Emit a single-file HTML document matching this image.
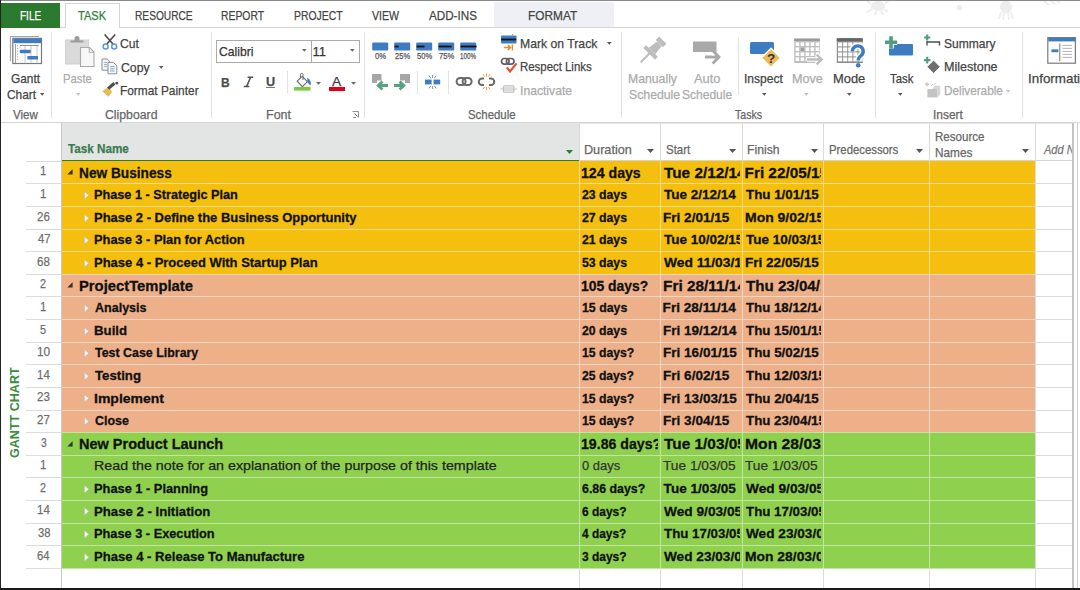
<!DOCTYPE html><html><head><meta charset="utf-8"><style>html,body{margin:0;padding:0}body{width:1080px;height:590px;overflow:hidden;position:relative;background:#fff;font-family:"Liberation Sans", sans-serif;}.t{position:absolute;white-space:nowrap;transform-origin:0 0}</style></head><body><div style="position:absolute;left:61.50px;top:123.20px;width:517.80px;height:38.10px;background:#E3E5E5;"></div>
<div style="position:absolute;left:579.30px;top:123.20px;width:493.50px;height:38.10px;background:#FFFFFF;"></div>
<div style="position:absolute;left:61.50px;top:159.60px;width:517.80px;height:1.90px;background:#2F7A33;"></div>
<div style="position:absolute;left:579.30px;top:160.30px;width:493.50px;height:1.20px;background:#D4D4D4;"></div>
<div style="position:absolute;left:61.50px;top:123.20px;width:1011.30px;height:0.80px;background:#E6E6E6;"></div>
<div style="position:absolute;left:62.10px;top:161.30px;width:973.40px;height:22.61px;background:#F4BF0E;"></div>
<div style="position:absolute;left:62.10px;top:183.91px;width:973.40px;height:22.61px;background:#F4BF0E;"></div>
<div style="position:absolute;left:62.10px;top:206.52px;width:973.40px;height:22.61px;background:#F4BF0E;"></div>
<div style="position:absolute;left:62.10px;top:229.13px;width:973.40px;height:22.61px;background:#F4BF0E;"></div>
<div style="position:absolute;left:62.10px;top:251.74px;width:973.40px;height:22.61px;background:#F4BF0E;"></div>
<div style="position:absolute;left:62.10px;top:274.35px;width:973.40px;height:22.61px;background:#EEB088;"></div>
<div style="position:absolute;left:62.10px;top:296.96px;width:973.40px;height:22.61px;background:#EEB088;"></div>
<div style="position:absolute;left:62.10px;top:319.57px;width:973.40px;height:22.61px;background:#EEB088;"></div>
<div style="position:absolute;left:62.10px;top:342.18px;width:973.40px;height:22.61px;background:#EEB088;"></div>
<div style="position:absolute;left:62.10px;top:364.79px;width:973.40px;height:22.61px;background:#EEB088;"></div>
<div style="position:absolute;left:62.10px;top:387.40px;width:973.40px;height:22.61px;background:#EEB088;"></div>
<div style="position:absolute;left:62.10px;top:410.01px;width:973.40px;height:22.61px;background:#EEB088;"></div>
<div style="position:absolute;left:62.10px;top:432.62px;width:973.40px;height:22.61px;background:#8FD14F;"></div>
<div style="position:absolute;left:62.10px;top:455.23px;width:973.40px;height:22.61px;background:#8FD14F;"></div>
<div style="position:absolute;left:62.10px;top:477.84px;width:973.40px;height:22.61px;background:#8FD14F;"></div>
<div style="position:absolute;left:62.10px;top:500.45px;width:973.40px;height:22.61px;background:#8FD14F;"></div>
<div style="position:absolute;left:62.10px;top:523.06px;width:973.40px;height:22.61px;background:#8FD14F;"></div>
<div style="position:absolute;left:62.10px;top:545.67px;width:973.40px;height:22.61px;background:#8FD14F;"></div>
<div style="position:absolute;left:26.00px;top:183.00px;width:35.50px;height:1.00px;background:#DCDCDC;"></div>
<div style="position:absolute;left:62.10px;top:183.00px;width:973.40px;height:1.00px;background:#F7DB8E;"></div>
<div style="position:absolute;left:1035.50px;top:183.00px;width:37.30px;height:1.00px;background:#DCDCDC;"></div>
<div style="position:absolute;left:26.00px;top:206.00px;width:35.50px;height:1.00px;background:#DCDCDC;"></div>
<div style="position:absolute;left:62.10px;top:206.00px;width:973.40px;height:1.00px;background:#F7DB8E;"></div>
<div style="position:absolute;left:1035.50px;top:206.00px;width:37.30px;height:1.00px;background:#DCDCDC;"></div>
<div style="position:absolute;left:26.00px;top:229.00px;width:35.50px;height:1.00px;background:#DCDCDC;"></div>
<div style="position:absolute;left:62.10px;top:229.00px;width:973.40px;height:1.00px;background:#F7DB8E;"></div>
<div style="position:absolute;left:1035.50px;top:229.00px;width:37.30px;height:1.00px;background:#DCDCDC;"></div>
<div style="position:absolute;left:26.00px;top:251.00px;width:35.50px;height:1.00px;background:#DCDCDC;"></div>
<div style="position:absolute;left:62.10px;top:251.00px;width:973.40px;height:1.00px;background:#F7DB8E;"></div>
<div style="position:absolute;left:1035.50px;top:251.00px;width:37.30px;height:1.00px;background:#DCDCDC;"></div>
<div style="position:absolute;left:26.00px;top:274.00px;width:35.50px;height:1.00px;background:#DCDCDC;"></div>
<div style="position:absolute;left:62.10px;top:274.00px;width:973.40px;height:1.00px;background:#F3D6C4;"></div>
<div style="position:absolute;left:1035.50px;top:274.00px;width:37.30px;height:1.00px;background:#DCDCDC;"></div>
<div style="position:absolute;left:26.00px;top:296.00px;width:35.50px;height:1.00px;background:#DCDCDC;"></div>
<div style="position:absolute;left:62.10px;top:296.00px;width:973.40px;height:1.00px;background:#F3D6C4;"></div>
<div style="position:absolute;left:1035.50px;top:296.00px;width:37.30px;height:1.00px;background:#DCDCDC;"></div>
<div style="position:absolute;left:26.00px;top:319.00px;width:35.50px;height:1.00px;background:#DCDCDC;"></div>
<div style="position:absolute;left:62.10px;top:319.00px;width:973.40px;height:1.00px;background:#F3D6C4;"></div>
<div style="position:absolute;left:1035.50px;top:319.00px;width:37.30px;height:1.00px;background:#DCDCDC;"></div>
<div style="position:absolute;left:26.00px;top:342.00px;width:35.50px;height:1.00px;background:#DCDCDC;"></div>
<div style="position:absolute;left:62.10px;top:342.00px;width:973.40px;height:1.00px;background:#F3D6C4;"></div>
<div style="position:absolute;left:1035.50px;top:342.00px;width:37.30px;height:1.00px;background:#DCDCDC;"></div>
<div style="position:absolute;left:26.00px;top:364.00px;width:35.50px;height:1.00px;background:#DCDCDC;"></div>
<div style="position:absolute;left:62.10px;top:364.00px;width:973.40px;height:1.00px;background:#F3D6C4;"></div>
<div style="position:absolute;left:1035.50px;top:364.00px;width:37.30px;height:1.00px;background:#DCDCDC;"></div>
<div style="position:absolute;left:26.00px;top:387.00px;width:35.50px;height:1.00px;background:#DCDCDC;"></div>
<div style="position:absolute;left:62.10px;top:387.00px;width:973.40px;height:1.00px;background:#F3D6C4;"></div>
<div style="position:absolute;left:1035.50px;top:387.00px;width:37.30px;height:1.00px;background:#DCDCDC;"></div>
<div style="position:absolute;left:26.00px;top:410.00px;width:35.50px;height:1.00px;background:#DCDCDC;"></div>
<div style="position:absolute;left:62.10px;top:410.00px;width:973.40px;height:1.00px;background:#F3D6C4;"></div>
<div style="position:absolute;left:1035.50px;top:410.00px;width:37.30px;height:1.00px;background:#DCDCDC;"></div>
<div style="position:absolute;left:26.00px;top:432.00px;width:35.50px;height:1.00px;background:#DCDCDC;"></div>
<div style="position:absolute;left:62.10px;top:432.00px;width:973.40px;height:1.00px;background:#C3E5A3;"></div>
<div style="position:absolute;left:1035.50px;top:432.00px;width:37.30px;height:1.00px;background:#DCDCDC;"></div>
<div style="position:absolute;left:26.00px;top:455.00px;width:35.50px;height:1.00px;background:#DCDCDC;"></div>
<div style="position:absolute;left:62.10px;top:455.00px;width:973.40px;height:1.00px;background:#C3E5A3;"></div>
<div style="position:absolute;left:1035.50px;top:455.00px;width:37.30px;height:1.00px;background:#DCDCDC;"></div>
<div style="position:absolute;left:26.00px;top:477.00px;width:35.50px;height:1.00px;background:#DCDCDC;"></div>
<div style="position:absolute;left:62.10px;top:477.00px;width:973.40px;height:1.00px;background:#C3E5A3;"></div>
<div style="position:absolute;left:1035.50px;top:477.00px;width:37.30px;height:1.00px;background:#DCDCDC;"></div>
<div style="position:absolute;left:26.00px;top:500.00px;width:35.50px;height:1.00px;background:#DCDCDC;"></div>
<div style="position:absolute;left:62.10px;top:500.00px;width:973.40px;height:1.00px;background:#C3E5A3;"></div>
<div style="position:absolute;left:1035.50px;top:500.00px;width:37.30px;height:1.00px;background:#DCDCDC;"></div>
<div style="position:absolute;left:26.00px;top:523.00px;width:35.50px;height:1.00px;background:#DCDCDC;"></div>
<div style="position:absolute;left:62.10px;top:523.00px;width:973.40px;height:1.00px;background:#C3E5A3;"></div>
<div style="position:absolute;left:1035.50px;top:523.00px;width:37.30px;height:1.00px;background:#DCDCDC;"></div>
<div style="position:absolute;left:26.00px;top:545.00px;width:35.50px;height:1.00px;background:#DCDCDC;"></div>
<div style="position:absolute;left:62.10px;top:545.00px;width:973.40px;height:1.00px;background:#C3E5A3;"></div>
<div style="position:absolute;left:1035.50px;top:545.00px;width:37.30px;height:1.00px;background:#DCDCDC;"></div>
<div style="position:absolute;left:26.00px;top:568.00px;width:35.50px;height:1.00px;background:#DCDCDC;"></div>
<div style="position:absolute;left:62.10px;top:568.00px;width:973.40px;height:1.00px;background:#C3E5A3;"></div>
<div style="position:absolute;left:1035.50px;top:568.00px;width:37.30px;height:1.00px;background:#DCDCDC;"></div>
<div style="position:absolute;left:26.00px;top:160.70px;width:35.50px;height:1.10px;background:#DCDCDC;"></div>
<div style="position:absolute;left:60.90px;top:123.20px;width:1.20px;height:466.80px;background:#C8C8C8;"></div>
<div style="position:absolute;left:578.80px;top:123.20px;width:1.00px;height:38.10px;background:#DADADA;"></div>
<div style="position:absolute;left:578.80px;top:161.30px;width:1.00px;height:22.61px;background:#F7DB8E;"></div>
<div style="position:absolute;left:578.80px;top:183.91px;width:1.00px;height:22.61px;background:#F7DB8E;"></div>
<div style="position:absolute;left:578.80px;top:206.52px;width:1.00px;height:22.61px;background:#F7DB8E;"></div>
<div style="position:absolute;left:578.80px;top:229.13px;width:1.00px;height:22.61px;background:#F7DB8E;"></div>
<div style="position:absolute;left:578.80px;top:251.74px;width:1.00px;height:22.61px;background:#F7DB8E;"></div>
<div style="position:absolute;left:578.80px;top:274.35px;width:1.00px;height:22.61px;background:#F3D6C4;"></div>
<div style="position:absolute;left:578.80px;top:296.96px;width:1.00px;height:22.61px;background:#F3D6C4;"></div>
<div style="position:absolute;left:578.80px;top:319.57px;width:1.00px;height:22.61px;background:#F3D6C4;"></div>
<div style="position:absolute;left:578.80px;top:342.18px;width:1.00px;height:22.61px;background:#F3D6C4;"></div>
<div style="position:absolute;left:578.80px;top:364.79px;width:1.00px;height:22.61px;background:#F3D6C4;"></div>
<div style="position:absolute;left:578.80px;top:387.40px;width:1.00px;height:22.61px;background:#F3D6C4;"></div>
<div style="position:absolute;left:578.80px;top:410.01px;width:1.00px;height:22.61px;background:#F3D6C4;"></div>
<div style="position:absolute;left:578.80px;top:432.62px;width:1.00px;height:22.61px;background:#C3E5A3;"></div>
<div style="position:absolute;left:578.80px;top:455.23px;width:1.00px;height:22.61px;background:#C3E5A3;"></div>
<div style="position:absolute;left:578.80px;top:477.84px;width:1.00px;height:22.61px;background:#C3E5A3;"></div>
<div style="position:absolute;left:578.80px;top:500.45px;width:1.00px;height:22.61px;background:#C3E5A3;"></div>
<div style="position:absolute;left:578.80px;top:523.06px;width:1.00px;height:22.61px;background:#C3E5A3;"></div>
<div style="position:absolute;left:578.80px;top:545.67px;width:1.00px;height:22.61px;background:#C3E5A3;"></div>
<div style="position:absolute;left:578.80px;top:568.28px;width:1.00px;height:21.72px;background:#DCDCDC;"></div>
<div style="position:absolute;left:660.00px;top:123.20px;width:1.00px;height:38.10px;background:#DADADA;"></div>
<div style="position:absolute;left:660.00px;top:161.30px;width:1.00px;height:22.61px;background:#F7DB8E;"></div>
<div style="position:absolute;left:660.00px;top:183.91px;width:1.00px;height:22.61px;background:#F7DB8E;"></div>
<div style="position:absolute;left:660.00px;top:206.52px;width:1.00px;height:22.61px;background:#F7DB8E;"></div>
<div style="position:absolute;left:660.00px;top:229.13px;width:1.00px;height:22.61px;background:#F7DB8E;"></div>
<div style="position:absolute;left:660.00px;top:251.74px;width:1.00px;height:22.61px;background:#F7DB8E;"></div>
<div style="position:absolute;left:660.00px;top:274.35px;width:1.00px;height:22.61px;background:#F3D6C4;"></div>
<div style="position:absolute;left:660.00px;top:296.96px;width:1.00px;height:22.61px;background:#F3D6C4;"></div>
<div style="position:absolute;left:660.00px;top:319.57px;width:1.00px;height:22.61px;background:#F3D6C4;"></div>
<div style="position:absolute;left:660.00px;top:342.18px;width:1.00px;height:22.61px;background:#F3D6C4;"></div>
<div style="position:absolute;left:660.00px;top:364.79px;width:1.00px;height:22.61px;background:#F3D6C4;"></div>
<div style="position:absolute;left:660.00px;top:387.40px;width:1.00px;height:22.61px;background:#F3D6C4;"></div>
<div style="position:absolute;left:660.00px;top:410.01px;width:1.00px;height:22.61px;background:#F3D6C4;"></div>
<div style="position:absolute;left:660.00px;top:432.62px;width:1.00px;height:22.61px;background:#C3E5A3;"></div>
<div style="position:absolute;left:660.00px;top:455.23px;width:1.00px;height:22.61px;background:#C3E5A3;"></div>
<div style="position:absolute;left:660.00px;top:477.84px;width:1.00px;height:22.61px;background:#C3E5A3;"></div>
<div style="position:absolute;left:660.00px;top:500.45px;width:1.00px;height:22.61px;background:#C3E5A3;"></div>
<div style="position:absolute;left:660.00px;top:523.06px;width:1.00px;height:22.61px;background:#C3E5A3;"></div>
<div style="position:absolute;left:660.00px;top:545.67px;width:1.00px;height:22.61px;background:#C3E5A3;"></div>
<div style="position:absolute;left:660.00px;top:568.28px;width:1.00px;height:21.72px;background:#DCDCDC;"></div>
<div style="position:absolute;left:741.90px;top:123.20px;width:1.00px;height:38.10px;background:#DADADA;"></div>
<div style="position:absolute;left:741.90px;top:161.30px;width:1.00px;height:22.61px;background:#F7DB8E;"></div>
<div style="position:absolute;left:741.90px;top:183.91px;width:1.00px;height:22.61px;background:#F7DB8E;"></div>
<div style="position:absolute;left:741.90px;top:206.52px;width:1.00px;height:22.61px;background:#F7DB8E;"></div>
<div style="position:absolute;left:741.90px;top:229.13px;width:1.00px;height:22.61px;background:#F7DB8E;"></div>
<div style="position:absolute;left:741.90px;top:251.74px;width:1.00px;height:22.61px;background:#F7DB8E;"></div>
<div style="position:absolute;left:741.90px;top:274.35px;width:1.00px;height:22.61px;background:#F3D6C4;"></div>
<div style="position:absolute;left:741.90px;top:296.96px;width:1.00px;height:22.61px;background:#F3D6C4;"></div>
<div style="position:absolute;left:741.90px;top:319.57px;width:1.00px;height:22.61px;background:#F3D6C4;"></div>
<div style="position:absolute;left:741.90px;top:342.18px;width:1.00px;height:22.61px;background:#F3D6C4;"></div>
<div style="position:absolute;left:741.90px;top:364.79px;width:1.00px;height:22.61px;background:#F3D6C4;"></div>
<div style="position:absolute;left:741.90px;top:387.40px;width:1.00px;height:22.61px;background:#F3D6C4;"></div>
<div style="position:absolute;left:741.90px;top:410.01px;width:1.00px;height:22.61px;background:#F3D6C4;"></div>
<div style="position:absolute;left:741.90px;top:432.62px;width:1.00px;height:22.61px;background:#C3E5A3;"></div>
<div style="position:absolute;left:741.90px;top:455.23px;width:1.00px;height:22.61px;background:#C3E5A3;"></div>
<div style="position:absolute;left:741.90px;top:477.84px;width:1.00px;height:22.61px;background:#C3E5A3;"></div>
<div style="position:absolute;left:741.90px;top:500.45px;width:1.00px;height:22.61px;background:#C3E5A3;"></div>
<div style="position:absolute;left:741.90px;top:523.06px;width:1.00px;height:22.61px;background:#C3E5A3;"></div>
<div style="position:absolute;left:741.90px;top:545.67px;width:1.00px;height:22.61px;background:#C3E5A3;"></div>
<div style="position:absolute;left:741.90px;top:568.28px;width:1.00px;height:21.72px;background:#DCDCDC;"></div>
<div style="position:absolute;left:823.30px;top:123.20px;width:1.00px;height:38.10px;background:#DADADA;"></div>
<div style="position:absolute;left:823.30px;top:161.30px;width:1.00px;height:22.61px;background:#F7DB8E;"></div>
<div style="position:absolute;left:823.30px;top:183.91px;width:1.00px;height:22.61px;background:#F7DB8E;"></div>
<div style="position:absolute;left:823.30px;top:206.52px;width:1.00px;height:22.61px;background:#F7DB8E;"></div>
<div style="position:absolute;left:823.30px;top:229.13px;width:1.00px;height:22.61px;background:#F7DB8E;"></div>
<div style="position:absolute;left:823.30px;top:251.74px;width:1.00px;height:22.61px;background:#F7DB8E;"></div>
<div style="position:absolute;left:823.30px;top:274.35px;width:1.00px;height:22.61px;background:#F3D6C4;"></div>
<div style="position:absolute;left:823.30px;top:296.96px;width:1.00px;height:22.61px;background:#F3D6C4;"></div>
<div style="position:absolute;left:823.30px;top:319.57px;width:1.00px;height:22.61px;background:#F3D6C4;"></div>
<div style="position:absolute;left:823.30px;top:342.18px;width:1.00px;height:22.61px;background:#F3D6C4;"></div>
<div style="position:absolute;left:823.30px;top:364.79px;width:1.00px;height:22.61px;background:#F3D6C4;"></div>
<div style="position:absolute;left:823.30px;top:387.40px;width:1.00px;height:22.61px;background:#F3D6C4;"></div>
<div style="position:absolute;left:823.30px;top:410.01px;width:1.00px;height:22.61px;background:#F3D6C4;"></div>
<div style="position:absolute;left:823.30px;top:432.62px;width:1.00px;height:22.61px;background:#C3E5A3;"></div>
<div style="position:absolute;left:823.30px;top:455.23px;width:1.00px;height:22.61px;background:#C3E5A3;"></div>
<div style="position:absolute;left:823.30px;top:477.84px;width:1.00px;height:22.61px;background:#C3E5A3;"></div>
<div style="position:absolute;left:823.30px;top:500.45px;width:1.00px;height:22.61px;background:#C3E5A3;"></div>
<div style="position:absolute;left:823.30px;top:523.06px;width:1.00px;height:22.61px;background:#C3E5A3;"></div>
<div style="position:absolute;left:823.30px;top:545.67px;width:1.00px;height:22.61px;background:#C3E5A3;"></div>
<div style="position:absolute;left:823.30px;top:568.28px;width:1.00px;height:21.72px;background:#DCDCDC;"></div>
<div style="position:absolute;left:929.20px;top:123.20px;width:1.00px;height:38.10px;background:#DADADA;"></div>
<div style="position:absolute;left:929.20px;top:161.30px;width:1.00px;height:22.61px;background:#F7DB8E;"></div>
<div style="position:absolute;left:929.20px;top:183.91px;width:1.00px;height:22.61px;background:#F7DB8E;"></div>
<div style="position:absolute;left:929.20px;top:206.52px;width:1.00px;height:22.61px;background:#F7DB8E;"></div>
<div style="position:absolute;left:929.20px;top:229.13px;width:1.00px;height:22.61px;background:#F7DB8E;"></div>
<div style="position:absolute;left:929.20px;top:251.74px;width:1.00px;height:22.61px;background:#F7DB8E;"></div>
<div style="position:absolute;left:929.20px;top:274.35px;width:1.00px;height:22.61px;background:#F3D6C4;"></div>
<div style="position:absolute;left:929.20px;top:296.96px;width:1.00px;height:22.61px;background:#F3D6C4;"></div>
<div style="position:absolute;left:929.20px;top:319.57px;width:1.00px;height:22.61px;background:#F3D6C4;"></div>
<div style="position:absolute;left:929.20px;top:342.18px;width:1.00px;height:22.61px;background:#F3D6C4;"></div>
<div style="position:absolute;left:929.20px;top:364.79px;width:1.00px;height:22.61px;background:#F3D6C4;"></div>
<div style="position:absolute;left:929.20px;top:387.40px;width:1.00px;height:22.61px;background:#F3D6C4;"></div>
<div style="position:absolute;left:929.20px;top:410.01px;width:1.00px;height:22.61px;background:#F3D6C4;"></div>
<div style="position:absolute;left:929.20px;top:432.62px;width:1.00px;height:22.61px;background:#C3E5A3;"></div>
<div style="position:absolute;left:929.20px;top:455.23px;width:1.00px;height:22.61px;background:#C3E5A3;"></div>
<div style="position:absolute;left:929.20px;top:477.84px;width:1.00px;height:22.61px;background:#C3E5A3;"></div>
<div style="position:absolute;left:929.20px;top:500.45px;width:1.00px;height:22.61px;background:#C3E5A3;"></div>
<div style="position:absolute;left:929.20px;top:523.06px;width:1.00px;height:22.61px;background:#C3E5A3;"></div>
<div style="position:absolute;left:929.20px;top:545.67px;width:1.00px;height:22.61px;background:#C3E5A3;"></div>
<div style="position:absolute;left:929.20px;top:568.28px;width:1.00px;height:21.72px;background:#DCDCDC;"></div>
<div style="position:absolute;left:1035.00px;top:123.20px;width:1.00px;height:38.10px;background:#DADADA;"></div>
<div style="position:absolute;left:1035.00px;top:161.30px;width:1.00px;height:22.61px;background:#DCDCDC;"></div>
<div style="position:absolute;left:1035.00px;top:183.91px;width:1.00px;height:22.61px;background:#DCDCDC;"></div>
<div style="position:absolute;left:1035.00px;top:206.52px;width:1.00px;height:22.61px;background:#DCDCDC;"></div>
<div style="position:absolute;left:1035.00px;top:229.13px;width:1.00px;height:22.61px;background:#DCDCDC;"></div>
<div style="position:absolute;left:1035.00px;top:251.74px;width:1.00px;height:22.61px;background:#DCDCDC;"></div>
<div style="position:absolute;left:1035.00px;top:274.35px;width:1.00px;height:22.61px;background:#DCDCDC;"></div>
<div style="position:absolute;left:1035.00px;top:296.96px;width:1.00px;height:22.61px;background:#DCDCDC;"></div>
<div style="position:absolute;left:1035.00px;top:319.57px;width:1.00px;height:22.61px;background:#DCDCDC;"></div>
<div style="position:absolute;left:1035.00px;top:342.18px;width:1.00px;height:22.61px;background:#DCDCDC;"></div>
<div style="position:absolute;left:1035.00px;top:364.79px;width:1.00px;height:22.61px;background:#DCDCDC;"></div>
<div style="position:absolute;left:1035.00px;top:387.40px;width:1.00px;height:22.61px;background:#DCDCDC;"></div>
<div style="position:absolute;left:1035.00px;top:410.01px;width:1.00px;height:22.61px;background:#DCDCDC;"></div>
<div style="position:absolute;left:1035.00px;top:432.62px;width:1.00px;height:22.61px;background:#DCDCDC;"></div>
<div style="position:absolute;left:1035.00px;top:455.23px;width:1.00px;height:22.61px;background:#DCDCDC;"></div>
<div style="position:absolute;left:1035.00px;top:477.84px;width:1.00px;height:22.61px;background:#DCDCDC;"></div>
<div style="position:absolute;left:1035.00px;top:500.45px;width:1.00px;height:22.61px;background:#DCDCDC;"></div>
<div style="position:absolute;left:1035.00px;top:523.06px;width:1.00px;height:22.61px;background:#DCDCDC;"></div>
<div style="position:absolute;left:1035.00px;top:545.67px;width:1.00px;height:22.61px;background:#DCDCDC;"></div>
<div style="position:absolute;left:1035.00px;top:568.28px;width:1.00px;height:21.72px;background:#DCDCDC;"></div>
<div style="position:absolute;left:1072.00px;top:123.20px;width:1.60px;height:466.80px;background:#C4C4C4;"></div>
<div style="position:absolute;left:1076.50px;top:123.00px;width:1.20px;height:465.00px;background:#CFCFCF;"></div>
<div class="t" style="left:68.00px;top:142.40px;font-size:13px;line-height:13px;font-weight:700;color:#3B7B50;-webkit-text-stroke:0.25px #3B7B50;transform:scaleX(0.8985);">Task Name</div>
<div class="t" style="left:584.03px;top:143.00px;font-size:13px;line-height:13px;font-weight:400;color:#666;-webkit-text-stroke:0.25px #666;transform:scaleX(0.9718);">Duration</div>
<div class="t" style="left:665.91px;top:143.00px;font-size:13px;line-height:13px;font-weight:400;color:#666;-webkit-text-stroke:0.25px #666;transform:scaleX(0.8812);">Start</div>
<div class="t" style="left:747.06px;top:143.00px;font-size:13px;line-height:13px;font-weight:400;color:#666;-webkit-text-stroke:0.25px #666;transform:scaleX(0.9394);">Finish</div>
<div class="t" style="left:829.13px;top:143.00px;font-size:13px;line-height:13px;font-weight:400;color:#666;-webkit-text-stroke:0.25px #666;transform:scaleX(0.8718);">Predecessors</div>
<div class="t" style="left:935.11px;top:130.00px;font-size:13px;line-height:13px;font-weight:400;color:#666;-webkit-text-stroke:0.25px #666;transform:scaleX(0.8889);">Resource</div>
<div class="t" style="left:935.09px;top:146.00px;font-size:13px;line-height:13px;font-weight:400;color:#666;-webkit-text-stroke:0.25px #666;transform:scaleX(0.9076);">Names</div>
<div style="position:absolute;left:1036.00px;top:139.00px;width:36.00px;height:21px;overflow:hidden"><div class="t" style="left:7.57px;top:4px;font-size:13px;line-height:13px;font-weight:400;color:#777;font-style:italic;-webkit-text-stroke:0.25px #777;transform:scaleX(0.8500);">Add New</div></div>
<svg style="position:absolute;left:565.50px;top:149.50px" width="7" height="4"><path d="M0 0H7L3.5 4Z" fill="#2F7D32"/></svg>
<svg style="position:absolute;left:646.50px;top:149.30px" width="7" height="4"><path d="M0 0H7L3.5 4Z" fill="#555"/></svg>
<svg style="position:absolute;left:728.50px;top:149.30px" width="7" height="4"><path d="M0 0H7L3.5 4Z" fill="#555"/></svg>
<svg style="position:absolute;left:810.50px;top:149.30px" width="7" height="4"><path d="M0 0H7L3.5 4Z" fill="#555"/></svg>
<svg style="position:absolute;left:915.50px;top:149.30px" width="7" height="4"><path d="M0 0H7L3.5 4Z" fill="#555"/></svg>
<svg style="position:absolute;left:1022.00px;top:149.30px" width="7" height="4"><path d="M0 0H7L3.5 4Z" fill="#555"/></svg>
<div class="t" style="left:40.02px;top:164.30px;font-size:13px;line-height:13px;font-weight:400;color:#6E6E6E;-webkit-text-stroke:0.25px #6E6E6E;transform:scaleX(0.8824);">1</div>
<svg style="position:absolute;left:67px;top:169.30px" width="6" height="6"><path d="M0.3 5.4L5.6 0.2V5.4Z" fill="#333"/></svg>
<div class="t" style="left:78.91px;top:164.90px;font-size:15.3px;line-height:15.3px;font-weight:700;color:#111;transform:scaleX(0.8941);-webkit-text-stroke:0.3px #111;">New Business</div>
<div style="position:absolute;left:580.30px;top:160.90px;width:78.20px;height:23.3px;overflow:hidden"><div class="t" style="left:1.08px;top:4px;font-size:15.3px;line-height:15.3px;font-weight:700;color:#111;transform:scaleX(0.9238);-webkit-text-stroke:0.3px #111;">124 days</div></div>
<div style="position:absolute;left:661.50px;top:160.90px;width:78.30px;height:23.3px;overflow:hidden"><div class="t" style="left:2.10px;top:4px;font-size:15.3px;line-height:15.3px;font-weight:700;color:#111;transform:scaleX(1.0022);-webkit-text-stroke:0.3px #111;">Tue 2/12/14</div></div>
<div style="position:absolute;left:743.40px;top:160.90px;width:77.80px;height:23.3px;overflow:hidden"><div class="t" style="left:1.20px;top:4px;font-size:15.3px;line-height:15.3px;font-weight:700;color:#111;-webkit-text-stroke:0.3px #111;">Fri 22/05/15</div></div>
<div class="t" style="left:40.02px;top:186.91px;font-size:13px;line-height:13px;font-weight:400;color:#6E6E6E;-webkit-text-stroke:0.25px #6E6E6E;transform:scaleX(0.8824);">1</div>
<svg style="position:absolute;left:84px;top:190.91px" width="6" height="9"><path d="M0.5 0.6L4.8 4.3L0.5 8.1Z" fill="#F2F2F2" stroke="#BDBDBD" stroke-width="0.6"/></svg>
<div class="t" style="left:94.27px;top:188.11px;font-size:13.6px;line-height:13.6px;font-weight:700;color:#111;transform:scaleX(0.9335);-webkit-text-stroke:0.3px #111;">Phase 1 - Strategic Plan</div>
<div style="position:absolute;left:580.30px;top:184.11px;width:78.20px;height:21.6px;overflow:hidden"><div class="t" style="left:1.70px;top:4px;font-size:13.6px;line-height:13.6px;font-weight:700;color:#111;transform:scaleX(0.9020);-webkit-text-stroke:0.3px #111;">23 days</div></div>
<div style="position:absolute;left:661.50px;top:184.11px;width:78.30px;height:21.6px;overflow:hidden"><div class="t" style="left:2.10px;top:4px;font-size:13.6px;line-height:13.6px;font-weight:700;color:#111;transform:scaleX(0.9939);-webkit-text-stroke:0.3px #111;">Tue 2/12/14</div></div>
<div style="position:absolute;left:743.40px;top:184.11px;width:77.80px;height:21.6px;overflow:hidden"><div class="t" style="left:2.20px;top:4px;font-size:13.6px;line-height:13.6px;font-weight:700;color:#111;transform:scaleX(0.9824);-webkit-text-stroke:0.3px #111;">Thu 1/01/15</div></div>
<div class="t" style="left:37.21px;top:209.52px;font-size:13px;line-height:13px;font-weight:400;color:#6E6E6E;-webkit-text-stroke:0.25px #6E6E6E;transform:scaleX(0.8850);">26</div>
<svg style="position:absolute;left:84px;top:213.52px" width="6" height="9"><path d="M0.5 0.6L4.8 4.3L0.5 8.1Z" fill="#F2F2F2" stroke="#BDBDBD" stroke-width="0.6"/></svg>
<div class="t" style="left:94.25px;top:210.72px;font-size:13.6px;line-height:13.6px;font-weight:700;color:#111;transform:scaleX(0.9547);-webkit-text-stroke:0.3px #111;">Phase 2 - Define the Business Opportunity</div>
<div style="position:absolute;left:580.30px;top:206.72px;width:78.20px;height:21.6px;overflow:hidden"><div class="t" style="left:1.70px;top:4px;font-size:13.6px;line-height:13.6px;font-weight:700;color:#111;transform:scaleX(0.9020);-webkit-text-stroke:0.3px #111;">27 days</div></div>
<div style="position:absolute;left:661.50px;top:206.72px;width:78.30px;height:21.6px;overflow:hidden"><div class="t" style="left:1.10px;top:4px;font-size:13.6px;line-height:13.6px;font-weight:700;color:#111;transform:scaleX(0.9972);-webkit-text-stroke:0.3px #111;">Fri 2/01/15</div></div>
<div style="position:absolute;left:743.40px;top:206.72px;width:77.80px;height:21.6px;overflow:hidden"><div class="t" style="left:1.17px;top:4px;font-size:13.6px;line-height:13.6px;font-weight:700;color:#111;transform:scaleX(1.0276);-webkit-text-stroke:0.3px #111;">Mon 9/02/15</div></div>
<div class="t" style="left:37.51px;top:232.13px;font-size:13px;line-height:13px;font-weight:400;color:#6E6E6E;-webkit-text-stroke:0.25px #6E6E6E;transform:scaleX(0.8634);">47</div>
<svg style="position:absolute;left:84px;top:236.13px" width="6" height="9"><path d="M0.5 0.6L4.8 4.3L0.5 8.1Z" fill="#F2F2F2" stroke="#BDBDBD" stroke-width="0.6"/></svg>
<div class="t" style="left:94.26px;top:233.33px;font-size:13.6px;line-height:13.6px;font-weight:700;color:#111;transform:scaleX(0.9437);-webkit-text-stroke:0.3px #111;">Phase 3 - Plan for Action</div>
<div style="position:absolute;left:580.30px;top:229.33px;width:78.20px;height:21.6px;overflow:hidden"><div class="t" style="left:1.70px;top:4px;font-size:13.6px;line-height:13.6px;font-weight:700;color:#111;transform:scaleX(0.9020);-webkit-text-stroke:0.3px #111;">21 days</div></div>
<div style="position:absolute;left:661.50px;top:229.33px;width:78.30px;height:21.6px;overflow:hidden"><div class="t" style="left:2.10px;top:4px;font-size:13.6px;line-height:13.6px;font-weight:700;color:#111;transform:scaleX(0.9941);-webkit-text-stroke:0.3px #111;">Tue 10/02/15</div></div>
<div style="position:absolute;left:743.40px;top:229.33px;width:77.80px;height:21.6px;overflow:hidden"><div class="t" style="left:2.20px;top:4px;font-size:13.6px;line-height:13.6px;font-weight:700;color:#111;transform:scaleX(0.9941);-webkit-text-stroke:0.3px #111;">Tue 10/03/15</div></div>
<div class="t" style="left:37.21px;top:254.74px;font-size:13px;line-height:13px;font-weight:400;color:#6E6E6E;-webkit-text-stroke:0.25px #6E6E6E;transform:scaleX(0.8850);">68</div>
<svg style="position:absolute;left:84px;top:258.74px" width="6" height="9"><path d="M0.5 0.6L4.8 4.3L0.5 8.1Z" fill="#F2F2F2" stroke="#BDBDBD" stroke-width="0.6"/></svg>
<div class="t" style="left:94.24px;top:255.94px;font-size:13.6px;line-height:13.6px;font-weight:700;color:#111;transform:scaleX(0.9555);-webkit-text-stroke:0.3px #111;">Phase 4 - Proceed With Startup Plan</div>
<div style="position:absolute;left:580.30px;top:251.94px;width:78.20px;height:21.6px;overflow:hidden"><div class="t" style="left:1.70px;top:4px;font-size:13.6px;line-height:13.6px;font-weight:700;color:#111;transform:scaleX(0.9020);-webkit-text-stroke:0.3px #111;">53 days</div></div>
<div style="position:absolute;left:661.50px;top:251.94px;width:78.30px;height:21.6px;overflow:hidden"><div class="t" style="left:2.10px;top:4px;font-size:13.6px;line-height:13.6px;font-weight:700;color:#111;transform:scaleX(1.0144);-webkit-text-stroke:0.3px #111;">Wed 11/03/15</div></div>
<div style="position:absolute;left:743.40px;top:251.94px;width:77.80px;height:21.6px;overflow:hidden"><div class="t" style="left:1.20px;top:4px;font-size:13.6px;line-height:13.6px;font-weight:700;color:#111;transform:scaleX(0.9971);-webkit-text-stroke:0.3px #111;">Fri 22/05/15</div></div>
<div class="t" style="left:40.34px;top:277.35px;font-size:13px;line-height:13px;font-weight:400;color:#6E6E6E;-webkit-text-stroke:0.25px #6E6E6E;transform:scaleX(0.8333);">2</div>
<svg style="position:absolute;left:67px;top:282.35px" width="6" height="6"><path d="M0.3 5.4L5.6 0.2V5.4Z" fill="#333"/></svg>
<div class="t" style="left:78.83px;top:277.95px;font-size:15.3px;line-height:15.3px;font-weight:700;color:#111;transform:scaleX(0.9670);-webkit-text-stroke:0.3px #111;">ProjectTemplate</div>
<div style="position:absolute;left:580.30px;top:273.95px;width:78.20px;height:23.3px;overflow:hidden"><div class="t" style="left:1.09px;top:4px;font-size:15.3px;line-height:15.3px;font-weight:700;color:#111;transform:scaleX(0.9090);-webkit-text-stroke:0.3px #111;">105 days?</div></div>
<div style="position:absolute;left:661.50px;top:273.95px;width:78.30px;height:23.3px;overflow:hidden"><div class="t" style="left:1.09px;top:4px;font-size:15.3px;line-height:15.3px;font-weight:700;color:#111;transform:scaleX(1.0059);-webkit-text-stroke:0.3px #111;">Fri 28/11/14</div></div>
<div style="position:absolute;left:743.40px;top:273.95px;width:77.80px;height:23.3px;overflow:hidden"><div class="t" style="left:2.20px;top:4px;font-size:15.3px;line-height:15.3px;font-weight:700;color:#111;transform:scaleX(0.9888);-webkit-text-stroke:0.3px #111;">Thu 23/04/15</div></div>
<div class="t" style="left:40.02px;top:299.96px;font-size:13px;line-height:13px;font-weight:400;color:#6E6E6E;-webkit-text-stroke:0.25px #6E6E6E;transform:scaleX(0.8824);">1</div>
<svg style="position:absolute;left:84px;top:303.96px" width="6" height="9"><path d="M0.5 0.6L4.8 4.3L0.5 8.1Z" fill="#F2F2F2" stroke="#BDBDBD" stroke-width="0.6"/></svg>
<div class="t" style="left:94.89px;top:301.16px;font-size:13.6px;line-height:13.6px;font-weight:700;color:#111;transform:scaleX(0.9218);-webkit-text-stroke:0.3px #111;">Analysis</div>
<div style="position:absolute;left:580.30px;top:297.16px;width:78.20px;height:21.6px;overflow:hidden"><div class="t" style="left:1.39px;top:4px;font-size:13.6px;line-height:13.6px;font-weight:700;color:#111;transform:scaleX(0.9082);-webkit-text-stroke:0.3px #111;">15 days</div></div>
<div style="position:absolute;left:661.50px;top:297.16px;width:78.30px;height:21.6px;overflow:hidden"><div class="t" style="left:1.10px;top:4px;font-size:13.6px;line-height:13.6px;font-weight:700;color:#111;-webkit-text-stroke:0.3px #111;">Fri 28/11/14</div></div>
<div style="position:absolute;left:743.40px;top:297.16px;width:77.80px;height:21.6px;overflow:hidden"><div class="t" style="left:2.20px;top:4px;font-size:13.6px;line-height:13.6px;font-weight:700;color:#111;transform:scaleX(0.9755);-webkit-text-stroke:0.3px #111;">Thu 18/12/14</div></div>
<div class="t" style="left:40.34px;top:322.57px;font-size:13px;line-height:13px;font-weight:400;color:#6E6E6E;-webkit-text-stroke:0.25px #6E6E6E;transform:scaleX(0.8333);">5</div>
<svg style="position:absolute;left:84px;top:326.57px" width="6" height="9"><path d="M0.5 0.6L4.8 4.3L0.5 8.1Z" fill="#F2F2F2" stroke="#BDBDBD" stroke-width="0.6"/></svg>
<div class="t" style="left:94.23px;top:323.77px;font-size:13.6px;line-height:13.6px;font-weight:700;color:#111;transform:scaleX(0.9750);-webkit-text-stroke:0.3px #111;">Build</div>
<div style="position:absolute;left:580.30px;top:319.77px;width:78.20px;height:21.6px;overflow:hidden"><div class="t" style="left:1.70px;top:4px;font-size:13.6px;line-height:13.6px;font-weight:700;color:#111;transform:scaleX(0.9020);-webkit-text-stroke:0.3px #111;">20 days</div></div>
<div style="position:absolute;left:661.50px;top:319.77px;width:78.30px;height:21.6px;overflow:hidden"><div class="t" style="left:1.11px;top:4px;font-size:13.6px;line-height:13.6px;font-weight:700;color:#111;transform:scaleX(0.9925);-webkit-text-stroke:0.3px #111;">Fri 19/12/14</div></div>
<div style="position:absolute;left:743.40px;top:319.77px;width:77.80px;height:21.6px;overflow:hidden"><div class="t" style="left:2.20px;top:4px;font-size:13.6px;line-height:13.6px;font-weight:700;color:#111;transform:scaleX(0.9795);-webkit-text-stroke:0.3px #111;">Thu 15/01/15</div></div>
<div class="t" style="left:36.89px;top:345.18px;font-size:13px;line-height:13px;font-weight:400;color:#6E6E6E;-webkit-text-stroke:0.25px #6E6E6E;transform:scaleX(0.9077);">10</div>
<svg style="position:absolute;left:84px;top:349.18px" width="6" height="9"><path d="M0.5 0.6L4.8 4.3L0.5 8.1Z" fill="#F2F2F2" stroke="#BDBDBD" stroke-width="0.6"/></svg>
<div class="t" style="left:95.20px;top:346.38px;font-size:13.6px;line-height:13.6px;font-weight:700;color:#111;transform:scaleX(0.9133);-webkit-text-stroke:0.3px #111;">Test Case Library</div>
<div style="position:absolute;left:580.30px;top:342.38px;width:78.20px;height:21.6px;overflow:hidden"><div class="t" style="left:1.40px;top:4px;font-size:13.6px;line-height:13.6px;font-weight:700;color:#111;transform:scaleX(0.8991);-webkit-text-stroke:0.3px #111;">15 days?</div></div>
<div style="position:absolute;left:661.50px;top:342.38px;width:78.30px;height:21.6px;overflow:hidden"><div class="t" style="left:1.10px;top:4px;font-size:13.6px;line-height:13.6px;font-weight:700;color:#111;transform:scaleX(0.9971);-webkit-text-stroke:0.3px #111;">Fri 16/01/15</div></div>
<div style="position:absolute;left:743.40px;top:342.38px;width:77.80px;height:21.6px;overflow:hidden"><div class="t" style="left:2.20px;top:4px;font-size:13.6px;line-height:13.6px;font-weight:700;color:#111;transform:scaleX(0.9824);-webkit-text-stroke:0.3px #111;">Thu 5/02/15</div></div>
<div class="t" style="left:36.92px;top:367.79px;font-size:13px;line-height:13px;font-weight:400;color:#6E6E6E;-webkit-text-stroke:0.25px #6E6E6E;transform:scaleX(0.8850);">14</div>
<svg style="position:absolute;left:84px;top:371.79px" width="6" height="9"><path d="M0.5 0.6L4.8 4.3L0.5 8.1Z" fill="#F2F2F2" stroke="#BDBDBD" stroke-width="0.6"/></svg>
<div class="t" style="left:95.20px;top:368.99px;font-size:13.6px;line-height:13.6px;font-weight:700;color:#111;transform:scaleX(0.9712);-webkit-text-stroke:0.3px #111;">Testing</div>
<div style="position:absolute;left:580.30px;top:364.99px;width:78.20px;height:21.6px;overflow:hidden"><div class="t" style="left:1.70px;top:4px;font-size:13.6px;line-height:13.6px;font-weight:700;color:#111;transform:scaleX(0.8939);-webkit-text-stroke:0.3px #111;">25 days?</div></div>
<div style="position:absolute;left:661.50px;top:364.99px;width:78.30px;height:21.6px;overflow:hidden"><div class="t" style="left:1.10px;top:4px;font-size:13.6px;line-height:13.6px;font-weight:700;color:#111;transform:scaleX(0.9972);-webkit-text-stroke:0.3px #111;">Fri 6/02/15</div></div>
<div style="position:absolute;left:743.40px;top:364.99px;width:77.80px;height:21.6px;overflow:hidden"><div class="t" style="left:2.20px;top:4px;font-size:13.6px;line-height:13.6px;font-weight:700;color:#111;transform:scaleX(0.9795);-webkit-text-stroke:0.3px #111;">Thu 12/03/15</div></div>
<div class="t" style="left:37.21px;top:390.40px;font-size:13px;line-height:13px;font-weight:400;color:#6E6E6E;-webkit-text-stroke:0.25px #6E6E6E;transform:scaleX(0.8850);">23</div>
<svg style="position:absolute;left:84px;top:394.40px" width="6" height="9"><path d="M0.5 0.6L4.8 4.3L0.5 8.1Z" fill="#F2F2F2" stroke="#BDBDBD" stroke-width="0.6"/></svg>
<div class="t" style="left:94.17px;top:391.60px;font-size:13.6px;line-height:13.6px;font-weight:700;color:#111;transform:scaleX(1.0299);-webkit-text-stroke:0.3px #111;">Implement</div>
<div style="position:absolute;left:580.30px;top:387.60px;width:78.20px;height:21.6px;overflow:hidden"><div class="t" style="left:1.40px;top:4px;font-size:13.6px;line-height:13.6px;font-weight:700;color:#111;transform:scaleX(0.8991);-webkit-text-stroke:0.3px #111;">15 days?</div></div>
<div style="position:absolute;left:661.50px;top:387.60px;width:78.30px;height:21.6px;overflow:hidden"><div class="t" style="left:1.10px;top:4px;font-size:13.6px;line-height:13.6px;font-weight:700;color:#111;transform:scaleX(0.9971);-webkit-text-stroke:0.3px #111;">Fri 13/03/15</div></div>
<div style="position:absolute;left:743.40px;top:387.60px;width:77.80px;height:21.6px;overflow:hidden"><div class="t" style="left:2.20px;top:4px;font-size:13.6px;line-height:13.6px;font-weight:700;color:#111;transform:scaleX(0.9824);-webkit-text-stroke:0.3px #111;">Thu 2/04/15</div></div>
<div class="t" style="left:37.21px;top:413.01px;font-size:13px;line-height:13px;font-weight:400;color:#6E6E6E;-webkit-text-stroke:0.25px #6E6E6E;transform:scaleX(0.8850);">27</div>
<svg style="position:absolute;left:84px;top:417.01px" width="6" height="9"><path d="M0.5 0.6L4.8 4.3L0.5 8.1Z" fill="#F2F2F2" stroke="#BDBDBD" stroke-width="0.6"/></svg>
<div class="t" style="left:94.59px;top:414.21px;font-size:13.6px;line-height:13.6px;font-weight:700;color:#111;transform:scaleX(0.9167);-webkit-text-stroke:0.3px #111;">Close</div>
<div style="position:absolute;left:580.30px;top:410.21px;width:78.20px;height:21.6px;overflow:hidden"><div class="t" style="left:1.40px;top:4px;font-size:13.6px;line-height:13.6px;font-weight:700;color:#111;transform:scaleX(0.8991);-webkit-text-stroke:0.3px #111;">15 days?</div></div>
<div style="position:absolute;left:661.50px;top:410.21px;width:78.30px;height:21.6px;overflow:hidden"><div class="t" style="left:1.10px;top:4px;font-size:13.6px;line-height:13.6px;font-weight:700;color:#111;transform:scaleX(0.9972);-webkit-text-stroke:0.3px #111;">Fri 3/04/15</div></div>
<div style="position:absolute;left:743.40px;top:410.21px;width:77.80px;height:21.6px;overflow:hidden"><div class="t" style="left:2.20px;top:4px;font-size:13.6px;line-height:13.6px;font-weight:700;color:#111;transform:scaleX(0.9795);-webkit-text-stroke:0.3px #111;">Thu 23/04/15</div></div>
<div class="t" style="left:40.64px;top:435.62px;font-size:13px;line-height:13px;font-weight:400;color:#6E6E6E;-webkit-text-stroke:0.25px #6E6E6E;transform:scaleX(0.7895);">3</div>
<svg style="position:absolute;left:67px;top:440.62px" width="6" height="6"><path d="M0.3 5.4L5.6 0.2V5.4Z" fill="#333"/></svg>
<div class="t" style="left:78.85px;top:436.22px;font-size:15.3px;line-height:15.3px;font-weight:700;color:#111;transform:scaleX(0.9479);-webkit-text-stroke:0.3px #111;">New Product Launch</div>
<div style="position:absolute;left:580.30px;top:432.22px;width:78.20px;height:23.3px;overflow:hidden"><div class="t" style="left:1.07px;top:4px;font-size:15.3px;line-height:15.3px;font-weight:700;color:#111;transform:scaleX(0.9252);-webkit-text-stroke:0.3px #111;">19.86 days?</div></div>
<div style="position:absolute;left:661.50px;top:432.22px;width:78.30px;height:23.3px;overflow:hidden"><div class="t" style="left:2.10px;top:4px;font-size:15.3px;line-height:15.3px;font-weight:700;color:#111;transform:scaleX(1.0063);-webkit-text-stroke:0.3px #111;">Tue 1/03/05</div></div>
<div style="position:absolute;left:743.40px;top:432.22px;width:77.80px;height:23.3px;overflow:hidden"><div class="t" style="left:1.17px;top:4px;font-size:15.3px;line-height:15.3px;font-weight:700;color:#111;transform:scaleX(1.0256);-webkit-text-stroke:0.3px #111;">Mon 28/03/05</div></div>
<div class="t" style="left:40.02px;top:458.23px;font-size:13px;line-height:13px;font-weight:400;color:#6E6E6E;-webkit-text-stroke:0.25px #6E6E6E;transform:scaleX(0.8824);">1</div>
<div class="t" style="left:94.25px;top:459.43px;font-size:13.6px;line-height:13.6px;font-weight:400;color:#222;-webkit-text-stroke:0.25px #222;transform:scaleX(1.0488);">Read the note for an explanation of the purpose of this template</div>
<div style="position:absolute;left:580.30px;top:455.43px;width:78.20px;height:21.6px;overflow:hidden"><div class="t" style="left:1.68px;top:4px;font-size:13.6px;line-height:13.6px;font-weight:400;color:#333;-webkit-text-stroke:0.25px #333;transform:scaleX(0.9534);">0 days</div></div>
<div style="position:absolute;left:661.50px;top:455.43px;width:78.30px;height:21.6px;overflow:hidden"><div class="t" style="left:1.76px;top:4px;font-size:13.6px;line-height:13.6px;font-weight:400;color:#333;-webkit-text-stroke:0.25px #333;transform:scaleX(1.0078);">Tue 1/03/05</div></div>
<div style="position:absolute;left:743.40px;top:455.43px;width:77.80px;height:21.6px;overflow:hidden"><div class="t" style="left:1.86px;top:4px;font-size:13.6px;line-height:13.6px;font-weight:400;color:#333;-webkit-text-stroke:0.25px #333;transform:scaleX(1.0078);">Tue 1/03/05</div></div>
<div class="t" style="left:40.34px;top:480.84px;font-size:13px;line-height:13px;font-weight:400;color:#6E6E6E;-webkit-text-stroke:0.25px #6E6E6E;transform:scaleX(0.8333);">2</div>
<svg style="position:absolute;left:84px;top:484.84px" width="6" height="9"><path d="M0.5 0.6L4.8 4.3L0.5 8.1Z" fill="#F2F2F2" stroke="#BDBDBD" stroke-width="0.6"/></svg>
<div class="t" style="left:94.26px;top:482.04px;font-size:13.6px;line-height:13.6px;font-weight:700;color:#111;transform:scaleX(0.9429);-webkit-text-stroke:0.3px #111;">Phase 1 - Planning</div>
<div style="position:absolute;left:580.30px;top:478.04px;width:78.20px;height:21.6px;overflow:hidden"><div class="t" style="left:1.70px;top:4px;font-size:13.6px;line-height:13.6px;font-weight:700;color:#111;transform:scaleX(0.9102);-webkit-text-stroke:0.3px #111;">6.86 days?</div></div>
<div style="position:absolute;left:661.50px;top:478.04px;width:78.30px;height:21.6px;overflow:hidden"><div class="t" style="left:2.10px;top:4px;font-size:13.6px;line-height:13.6px;font-weight:700;color:#111;-webkit-text-stroke:0.3px #111;">Tue 1/03/05</div></div>
<div style="position:absolute;left:743.40px;top:478.04px;width:77.80px;height:21.6px;overflow:hidden"><div class="t" style="left:2.20px;top:4px;font-size:13.6px;line-height:13.6px;font-weight:700;color:#111;transform:scaleX(1.0075);-webkit-text-stroke:0.3px #111;">Wed 9/03/05</div></div>
<div class="t" style="left:36.92px;top:503.45px;font-size:13px;line-height:13px;font-weight:400;color:#6E6E6E;-webkit-text-stroke:0.25px #6E6E6E;transform:scaleX(0.8850);">14</div>
<svg style="position:absolute;left:84px;top:507.45px" width="6" height="9"><path d="M0.5 0.6L4.8 4.3L0.5 8.1Z" fill="#F2F2F2" stroke="#BDBDBD" stroke-width="0.6"/></svg>
<div class="t" style="left:94.23px;top:504.65px;font-size:13.6px;line-height:13.6px;font-weight:700;color:#111;transform:scaleX(0.9685);-webkit-text-stroke:0.3px #111;">Phase 2 - Initiation</div>
<div style="position:absolute;left:580.30px;top:500.65px;width:78.20px;height:21.6px;overflow:hidden"><div class="t" style="left:1.71px;top:4px;font-size:13.6px;line-height:13.6px;font-weight:700;color:#111;transform:scaleX(0.8809);-webkit-text-stroke:0.3px #111;">6 days?</div></div>
<div style="position:absolute;left:661.50px;top:500.65px;width:78.30px;height:21.6px;overflow:hidden"><div class="t" style="left:2.10px;top:4px;font-size:13.6px;line-height:13.6px;font-weight:700;color:#111;transform:scaleX(1.0075);-webkit-text-stroke:0.3px #111;">Wed 9/03/05</div></div>
<div style="position:absolute;left:743.40px;top:500.65px;width:77.80px;height:21.6px;overflow:hidden"><div class="t" style="left:2.20px;top:4px;font-size:13.6px;line-height:13.6px;font-weight:700;color:#111;transform:scaleX(0.9795);-webkit-text-stroke:0.3px #111;">Thu 17/03/05</div></div>
<div class="t" style="left:37.51px;top:526.06px;font-size:13px;line-height:13px;font-weight:400;color:#6E6E6E;-webkit-text-stroke:0.25px #6E6E6E;transform:scaleX(0.8634);">38</div>
<svg style="position:absolute;left:84px;top:530.06px" width="6" height="9"><path d="M0.5 0.6L4.8 4.3L0.5 8.1Z" fill="#F2F2F2" stroke="#BDBDBD" stroke-width="0.6"/></svg>
<div class="t" style="left:94.26px;top:527.26px;font-size:13.6px;line-height:13.6px;font-weight:700;color:#111;transform:scaleX(0.9395);-webkit-text-stroke:0.3px #111;">Phase 3 - Execution</div>
<div style="position:absolute;left:580.30px;top:523.26px;width:78.20px;height:21.6px;overflow:hidden"><div class="t" style="left:2.00px;top:4px;font-size:13.6px;line-height:13.6px;font-weight:700;color:#111;transform:scaleX(0.8750);-webkit-text-stroke:0.3px #111;">4 days?</div></div>
<div style="position:absolute;left:661.50px;top:523.26px;width:78.30px;height:21.6px;overflow:hidden"><div class="t" style="left:2.10px;top:4px;font-size:13.6px;line-height:13.6px;font-weight:700;color:#111;transform:scaleX(0.9795);-webkit-text-stroke:0.3px #111;">Thu 17/03/05</div></div>
<div style="position:absolute;left:743.40px;top:523.26px;width:77.80px;height:21.6px;overflow:hidden"><div class="t" style="left:2.20px;top:4px;font-size:13.6px;line-height:13.6px;font-weight:700;color:#111;transform:scaleX(1.0025);-webkit-text-stroke:0.3px #111;">Wed 23/03/05</div></div>
<div class="t" style="left:37.22px;top:548.67px;font-size:13px;line-height:13px;font-weight:400;color:#6E6E6E;-webkit-text-stroke:0.25px #6E6E6E;transform:scaleX(0.8634);">64</div>
<svg style="position:absolute;left:84px;top:552.67px" width="6" height="9"><path d="M0.5 0.6L4.8 4.3L0.5 8.1Z" fill="#F2F2F2" stroke="#BDBDBD" stroke-width="0.6"/></svg>
<div class="t" style="left:94.24px;top:549.87px;font-size:13.6px;line-height:13.6px;font-weight:700;color:#111;transform:scaleX(0.9617);-webkit-text-stroke:0.3px #111;">Phase 4 - Release To Manufacture</div>
<div style="position:absolute;left:580.30px;top:545.87px;width:78.20px;height:21.6px;overflow:hidden"><div class="t" style="left:1.71px;top:4px;font-size:13.6px;line-height:13.6px;font-weight:700;color:#111;transform:scaleX(0.8809);-webkit-text-stroke:0.3px #111;">3 days?</div></div>
<div style="position:absolute;left:661.50px;top:545.87px;width:78.30px;height:21.6px;overflow:hidden"><div class="t" style="left:2.10px;top:4px;font-size:13.6px;line-height:13.6px;font-weight:700;color:#111;transform:scaleX(1.0025);-webkit-text-stroke:0.3px #111;">Wed 23/03/05</div></div>
<div style="position:absolute;left:743.40px;top:545.87px;width:77.80px;height:21.6px;overflow:hidden"><div class="t" style="left:1.18px;top:4px;font-size:13.6px;line-height:13.6px;font-weight:700;color:#111;transform:scaleX(1.0207);-webkit-text-stroke:0.3px #111;">Mon 28/03/05</div></div>
<div style="position:absolute;left:7.5px;top:458px;width:90px;height:14px;transform:rotate(-90deg);transform-origin:0 0;overflow:visible"><div class="t" style="left:0;top:0;font-size:13.5px;line-height:14px;font-weight:700;color:#3C8C40;transform:scaleX(0.93)">GANTT CHART</div></div>
<div style="position:absolute;left:0.00px;top:27.30px;width:1080.00px;height:1.10px;background:#D4D4D4;"></div>
<div style="position:absolute;left:1.20px;top:2.50px;width:59.30px;height:25.50px;background:#2B7A30;"></div>
<div style="position:absolute;left:65.00px;top:2.50px;width:54.50px;height:25.90px;background:#FFFFFF;box-sizing:border-box;border:1px solid #D4D4D4;border-bottom:none"></div>
<div style="position:absolute;left:494.00px;top:1.50px;width:119.50px;height:25.80px;background:#EEF0F5;"></div>
<div class="t" style="left:20.26px;top:9.00px;font-size:13.5px;line-height:13.5px;font-weight:400;color:#FFFFFF;-webkit-text-stroke:0.25px #FFFFFF;transform:scaleX(0.7407);">FILE</div>
<div class="t" style="left:77.73px;top:9.00px;font-size:13.5px;line-height:13.5px;font-weight:400;color:#2F7D3A;-webkit-text-stroke:0.25px #2F7D3A;transform:scaleX(0.8168);">TASK</div>
<div class="t" style="left:134.75px;top:9.00px;font-size:13.5px;line-height:13.5px;font-weight:400;color:#444444;-webkit-text-stroke:0.25px #444444;transform:scaleX(0.7533);">RESOURCE</div>
<div class="t" style="left:221.23px;top:9.00px;font-size:13.5px;line-height:13.5px;font-weight:400;color:#444444;-webkit-text-stroke:0.25px #444444;transform:scaleX(0.7683);">REPORT</div>
<div class="t" style="left:293.73px;top:9.00px;font-size:13.5px;line-height:13.5px;font-weight:400;color:#444444;-webkit-text-stroke:0.25px #444444;transform:scaleX(0.7703);">PROJECT</div>
<div class="t" style="left:372.00px;top:9.00px;font-size:13.5px;line-height:13.5px;font-weight:400;color:#444444;-webkit-text-stroke:0.25px #444444;transform:scaleX(0.7864);">VIEW</div>
<div class="t" style="left:428.50px;top:9.00px;font-size:13.5px;line-height:13.5px;font-weight:400;color:#444444;-webkit-text-stroke:0.25px #444444;transform:scaleX(0.8636);">ADD-INS</div>
<div class="t" style="left:528.12px;top:9.00px;font-size:13.5px;line-height:13.5px;font-weight:400;color:#444444;-webkit-text-stroke:0.25px #444444;transform:scaleX(0.8780);">FORMAT</div>
<svg style="position:absolute;left:0;top:0" width="1080" height="27" viewBox="0 0 1080 27"><g fill="#EDEDED" stroke="#EDEDED"><ellipse cx="878" cy="6" rx="7" ry="5" stroke="none"/><path d="M871 4l-4-3M872 9l-5 3M885 4l4-4M884 9l4 3M876 11l-1 4M881 11l2 4" stroke-width="2" fill="none"/><circle cx="959.5" cy="7.8" r="2.8" stroke="none"/><ellipse cx="1006" cy="7" rx="6" ry="6.5" stroke="none"/><path d="M1001 12l-2 7M1004 13l-1 7M1008 13l1 7M1011 12l2 7" stroke-width="1.8" fill="none"/><path d="M1043 0l6 5M1050 0l5 4M1056 0l4 3" stroke-width="2" fill="none"/></g></svg>
<div style="position:absolute;left:0.00px;top:121.60px;width:1080.00px;height:1.20px;background:#D6D6D6;"></div>
<div style="position:absolute;left:51.00px;top:32.00px;width:1.00px;height:86.00px;background:#E2E2E2;"></div>
<div style="position:absolute;left:211.00px;top:32.00px;width:1.00px;height:86.00px;background:#E2E2E2;"></div>
<div style="position:absolute;left:364.10px;top:32.00px;width:1.00px;height:86.00px;background:#E2E2E2;"></div>
<div style="position:absolute;left:621.00px;top:32.00px;width:1.00px;height:86.00px;background:#E2E2E2;"></div>
<div style="position:absolute;left:875.00px;top:32.00px;width:1.00px;height:86.00px;background:#E2E2E2;"></div>
<div style="position:absolute;left:1022.00px;top:32.00px;width:1.00px;height:86.00px;background:#E2E2E2;"></div>
<div style="position:absolute;left:738.20px;top:38.00px;width:1.00px;height:57.00px;background:#E2E2E2;"></div>
<div style="position:absolute;left:286.70px;top:71.00px;width:1.00px;height:22.00px;background:#E2E2E2;"></div>
<div style="position:absolute;left:417.30px;top:71.00px;width:1.00px;height:23.00px;background:#E2E2E2;"></div>
<div style="position:absolute;left:448.30px;top:71.00px;width:1.00px;height:23.00px;background:#E2E2E2;"></div>
<div class="t" style="left:13.00px;top:108.60px;font-size:12.5px;line-height:12.5px;font-weight:400;color:#666666;-webkit-text-stroke:0.25px #666666;transform:scaleX(0.9259);">View</div>
<div class="t" style="left:105.35px;top:108.60px;font-size:12.5px;line-height:12.5px;font-weight:400;color:#666666;-webkit-text-stroke:0.25px #666666;transform:scaleX(0.9808);">Clipboard</div>
<div class="t" style="left:266.00px;top:108.60px;font-size:12.5px;line-height:12.5px;font-weight:400;color:#666666;-webkit-text-stroke:0.25px #666666;">Font</div>
<div class="t" style="left:468.39px;top:108.60px;font-size:12.5px;line-height:12.5px;font-weight:400;color:#666666;-webkit-text-stroke:0.25px #666666;transform:scaleX(0.9118);">Schedule</div>
<div class="t" style="left:734.72px;top:108.60px;font-size:12.5px;line-height:12.5px;font-weight:400;color:#666666;-webkit-text-stroke:0.25px #666666;transform:scaleX(0.8457);">Tasks</div>
<div class="t" style="left:933.04px;top:108.60px;font-size:12.5px;line-height:12.5px;font-weight:400;color:#666666;-webkit-text-stroke:0.25px #666666;transform:scaleX(0.9560);">Insert</div>
<svg style="position:absolute;left:9px;top:35px;overflow:visible" width="34" height="31" viewBox="0 0 34 31">
<path d="M1.5 26V1.5H30" fill="none" stroke="#A6A6A6" stroke-width="1.2"/>
<rect x="3.8" y="3.3" width="28.7" height="25.2" fill="#fff" stroke="#7A7A7A" stroke-width="1.2"/>
<rect x="4.4" y="3.6" width="28" height="4.6" fill="#3E7CC2"/>
<path d="M8.6 10v17" stroke="#A9A9A9" stroke-width="1" stroke-dasharray="1.2 1.6"/>
<path d="M6.5 9v19" stroke="#9A9A9A" stroke-width="0.9"/>
<path d="M11 10.5H30M11 10.5v2M16 10.5v17M22 10.5v17M28 10.5v17" stroke="#BFBFBF" stroke-width="0.9" fill="none"/>
<path d="M11 10.5H29.5" stroke="#8F8F8F" stroke-width="1"/>
<rect x="10.8" y="14.8" width="11" height="3.4" rx="1" fill="#3E7CC2"/>
<rect x="18.4" y="21" width="10.6" height="3.6" rx="0.6" fill="#3E7CC2"/>
</svg>
<div class="t" style="left:11.09px;top:71.50px;font-size:13px;line-height:13px;font-weight:400;color:#444444;-webkit-text-stroke:0.25px #444444;transform:scaleX(0.9129);">Gantt</div>
<div class="t" style="left:6.99px;top:87.50px;font-size:13px;line-height:13px;font-weight:400;color:#444444;-webkit-text-stroke:0.25px #444444;transform:scaleX(0.9129);">Chart</div>
<svg style="position:absolute;left:40px;top:93px;overflow:visible" width="5" height="3" viewBox="0 0 5 3"><path d="M0 0H4.4L2.2 2.8Z" fill="#555"/></svg>
<svg style="position:absolute;left:64px;top:36px;overflow:visible" width="32" height="32" viewBox="0 0 32 32">
<rect x="1.5" y="4" width="23" height="24" fill="#DADADA" stroke="#D0D0D0" stroke-width="1"/>
<path d="M6.5 6.5V4.5H10.5V2.4A2.4 2.4 0 0 1 15.5 2.4V4.5H19.5V6.5Z" fill="#9C9C9C"/>
<path d="M16.5 11.5H25.5L30 16V30.5H16.5Z" fill="#F7F7F7" stroke="#A9A9A9" stroke-width="1.1"/>
<path d="M25.2 11.5V16.3H30" fill="none" stroke="#A9A9A9" stroke-width="1"/>
</svg>
<div class="t" style="left:63.23px;top:71.50px;font-size:13px;line-height:13px;font-weight:400;color:#ABABAB;-webkit-text-stroke:0.25px #ABABAB;transform:scaleX(0.8684);">Paste</div>
<svg style="position:absolute;left:75.5px;top:93px;overflow:visible" width="5" height="3" viewBox="0 0 5 3"><path d="M0 0H4.4L2.2 2.8Z" fill="#C4C4C4"/></svg>
<svg style="position:absolute;left:101px;top:33px;overflow:visible" width="18" height="18" viewBox="0 0 18 18">
<path d="M3.6 1.5L12.2 11.2M14.2 1.5L5.6 11.2" stroke="#4A4A4A" stroke-width="1.6" fill="none"/>
<circle cx="4.6" cy="13.4" r="2.5" fill="none" stroke="#5D9AD6" stroke-width="1.5"/>
<circle cx="13.2" cy="13.4" r="2.5" fill="none" stroke="#5D9AD6" stroke-width="1.5"/>
</svg>
<div class="t" style="left:120.48px;top:36.50px;font-size:13px;line-height:13px;font-weight:400;color:#444444;-webkit-text-stroke:0.25px #444444;transform:scaleX(0.9356);">Cut</div>
<svg style="position:absolute;left:101px;top:58px;overflow:visible" width="18" height="17" viewBox="0 0 18 17">
<path d="M1 1H6.2L8.4 3.2V12.2H1Z" fill="#F6F6F6" stroke="#8C8C8C" stroke-width="1"/>
<path d="M3 4.5H6M3 6.5H6M3 8.5H6" stroke="#6FA6DA" stroke-width="0.8"/>
<path d="M7 4.4H12.4L15.8 7.8V15.8H7Z" fill="#F9F9F9" stroke="#8C8C8C" stroke-width="1"/>
<path d="M9.2 8.6H13.6M9.2 10.8H13.6M9.2 13H13.6" stroke="#5B9BD5" stroke-width="0.9"/>
</svg>
<div class="t" style="left:120.57px;top:60.60px;font-size:13px;line-height:13px;font-weight:400;color:#444444;-webkit-text-stroke:0.25px #444444;transform:scaleX(0.9438);">Copy</div>
<svg style="position:absolute;left:159px;top:66px;overflow:visible" width="5" height="3" viewBox="0 0 5 3"><path d="M0 0H4.4L2.2 2.8Z" fill="#555"/></svg>
<svg style="position:absolute;left:101px;top:81px;overflow:visible" width="19" height="17" viewBox="0 0 19 17">
<path d="M1.2 10.2L6.8 6.2L11.2 10.8L7.4 15.8Z" fill="#E8B957"/>
<path d="M7.2 7.6L13.4 2.2" stroke="#4D4D4D" stroke-width="3.2"/>
<circle cx="15.8" cy="2.2" r="1.4" fill="#4D4D4D"/>
</svg>
<div class="t" style="left:120.39px;top:83.50px;font-size:13px;line-height:13px;font-weight:400;color:#444444;-webkit-text-stroke:0.25px #444444;transform:scaleX(0.9141);">Format Painter</div>
<div style="position:absolute;left:216.00px;top:39.50px;width:143.50px;height:23.00px;background:#FFFFFF;box-sizing:border-box;border:1.1px solid #ABABAB"></div>
<div style="position:absolute;left:310.50px;top:39.50px;width:1.20px;height:23.00px;background:#ABABAB;"></div>
<div class="t" style="left:218.98px;top:44.60px;font-size:13px;line-height:13px;font-weight:400;color:#333;-webkit-text-stroke:0.25px #333;transform:scaleX(0.9340);">Calibri</div>
<div class="t" style="left:312.60px;top:44.60px;font-size:13px;line-height:13px;font-weight:400;color:#333;-webkit-text-stroke:0.25px #333;">11</div>
<svg style="position:absolute;left:301.5px;top:49px;overflow:visible" width="5" height="3" viewBox="0 0 5 3"><path d="M0 0H4.6L2.3 2.8Z" fill="#666"/></svg>
<svg style="position:absolute;left:349.6px;top:49.3px;overflow:visible" width="5" height="3" viewBox="0 0 5 3"><path d="M0 0H4.6L2.3 2.8Z" fill="#666"/></svg>
<div class="t" style="left:221.21px;top:76.00px;font-size:13.5px;line-height:13.5px;font-weight:700;color:#4D4D4D;-webkit-text-stroke:0.25px #4D4D4D;transform:scaleX(0.8880);">B</div>
<svg style="position:absolute;left:243px;top:76px;overflow:visible" width="11" height="12" viewBox="0 0 11 12"><path d="M4.6 1.2H10.2M0.8 10.6H6.4M7.6 1.2L3.6 10.6" stroke="#505050" stroke-width="1.5" fill="none"/></svg>
<div class="t" style="left:265.55px;top:74.60px;font-size:13px;line-height:13px;font-weight:700;color:#4D4D4D;-webkit-text-stroke:0.25px #4D4D4D;transform:scaleX(0.9750);">U</div>
<div style="position:absolute;left:265.80px;top:87.00px;width:9.40px;height:1.20px;background:#7A7A7A;"></div>
<svg style="position:absolute;left:293px;top:73px;overflow:visible" width="20" height="19" viewBox="0 0 20 19">
<path d="M4.2 8.2L9.2 3.4L14.4 8.6L9.4 13.6Z" fill="#FFFFFF" stroke="#6B6B6B" stroke-width="1.1"/>
<path d="M7.6 5.2V1.6A1.2 1.2 0 0 1 10 1.6V7" fill="none" stroke="#6B6B6B" stroke-width="1"/>
<path d="M14.2 4.6C17.4 6.6 18.6 9.8 17.6 12.6L14.6 9.8Z" fill="#3E7CC2"/>
<rect x="1" y="14" width="16.5" height="3.6" fill="#7ACB45"/>
</svg>
<svg style="position:absolute;left:316px;top:82px;overflow:visible" width="6" height="3" viewBox="0 0 6 3"><path d="M0 0H5L2.5 2.8Z" fill="#666"/></svg>
<div class="t" style="left:332.00px;top:75.00px;font-size:13.5px;line-height:13.5px;font-weight:400;color:#3A3A3A;-webkit-text-stroke:0.25px #3A3A3A;transform:scaleX(1.0222);">A</div>
<div style="position:absolute;left:328.50px;top:87.00px;width:16.00px;height:3.60px;background:#E3001B;"></div>
<svg style="position:absolute;left:351px;top:82px;overflow:visible" width="6" height="3" viewBox="0 0 6 3"><path d="M0 0H5L2.5 2.8Z" fill="#666"/></svg>
<svg style="position:absolute;left:352px;top:111px;overflow:visible" width="7" height="7" viewBox="0 0 7 7"><path d="M0.5 0.5H6.5V6.5M1 6.5H4M6.5 3V6" stroke="#888" stroke-width="0.9" fill="none"/><path d="M2.5 2.5L5.5 5.5" stroke="#666" stroke-width="1"/></svg>
<svg style="position:absolute;left:372px;top:42px;overflow:visible" width="16.5" height="9" viewBox="0 0 16.5 9"><rect x="0.2" y="0.4" width="16" height="8.2" rx="1.2" fill="#3E7CC2"/></svg>
<div class="t" style="left:374.50px;top:52.20px;font-size:8.5px;line-height:8.5px;font-weight:400;color:#555;-webkit-text-stroke:0.25px #555;transform:scaleX(0.9000);">0%</div>
<svg style="position:absolute;left:394px;top:42px;overflow:visible" width="16.5" height="9" viewBox="0 0 16.5 9"><rect x="0.2" y="0.4" width="16" height="8.2" rx="1.2" fill="#3E7CC2"/><rect x="0.6" y="3.6" width="4" height="1.8" fill="#111"/></svg>
<div class="t" style="left:395.00px;top:52.20px;font-size:8.5px;line-height:8.5px;font-weight:400;color:#555;-webkit-text-stroke:0.25px #555;transform:scaleX(0.8878);">25%</div>
<svg style="position:absolute;left:416px;top:42px;overflow:visible" width="16.5" height="9" viewBox="0 0 16.5 9"><rect x="0.2" y="0.4" width="16" height="8.2" rx="1.2" fill="#3E7CC2"/><rect x="0.6" y="3.6" width="8" height="1.8" fill="#111"/></svg>
<div class="t" style="left:417.00px;top:52.20px;font-size:8.5px;line-height:8.5px;font-weight:400;color:#555;-webkit-text-stroke:0.25px #555;transform:scaleX(0.8878);">50%</div>
<svg style="position:absolute;left:438px;top:42px;overflow:visible" width="16.5" height="9" viewBox="0 0 16.5 9"><rect x="0.2" y="0.4" width="16" height="8.2" rx="1.2" fill="#3E7CC2"/><rect x="0.6" y="3.6" width="13" height="1.8" fill="#111"/></svg>
<div class="t" style="left:439.00px;top:52.20px;font-size:8.5px;line-height:8.5px;font-weight:400;color:#555;-webkit-text-stroke:0.25px #555;transform:scaleX(0.8878);">75%</div>
<svg style="position:absolute;left:460px;top:42px;overflow:visible" width="16.5" height="9" viewBox="0 0 16.5 9"><rect x="0.2" y="0.4" width="16" height="8.2" rx="1.2" fill="#3E7CC2"/><rect x="0.6" y="3.6" width="16" height="1.8" fill="#111"/></svg>
<div class="t" style="left:459.81px;top:52.20px;font-size:8.5px;line-height:8.5px;font-weight:400;color:#555;-webkit-text-stroke:0.25px #555;transform:scaleX(0.7381);">100%</div>
<svg style="position:absolute;left:371px;top:73px;overflow:visible" width="19" height="18" viewBox="0 0 19 18">
<path d="M1 1H10.5V7.5H6V10H1Z" fill="#A6A6A6"/>
<path d="M17 12.5H7.5M11.4 8.4L7.2 12.5L11.4 16.6" fill="none" stroke="#55A283" stroke-width="2.8"/>
</svg>
<svg style="position:absolute;left:393px;top:73px;overflow:visible" width="19" height="18" viewBox="0 0 19 18">
<path d="M7 1H17V10H12V7.5H7Z" fill="#A6A6A6"/>
<path d="M1 12.5H10.5M6.6 8.4L10.8 12.5L6.6 16.6" fill="none" stroke="#55A283" stroke-width="2.8"/>
</svg>
<svg style="position:absolute;left:424px;top:74px;overflow:visible" width="18" height="16" viewBox="0 0 18 16">
<rect x="1" y="5.6" width="6.6" height="4.8" fill="#3E7CC2"/><rect x="9.6" y="5.6" width="6.6" height="4.8" fill="#3E7CC2"/>
<path d="M8.6 1v3M5 1.6l1.8 2.6M12.2 1.6l-1.8 2.6M8.6 15v-3M5 14.4l1.8-2.6M12.2 14.4l-1.8-2.6" stroke="#7F7F7F" stroke-width="0.9"/>
</svg>
<svg style="position:absolute;left:455px;top:76px;overflow:visible" width="19" height="12" viewBox="0 0 19 12">
<rect x="1.6" y="2" width="9" height="7" rx="3.5" fill="none" stroke="#6A6A6A" stroke-width="2"/>
<rect x="7.6" y="2" width="9" height="7" rx="3.5" fill="none" stroke="#6A6A6A" stroke-width="2"/>
</svg>
<svg style="position:absolute;left:478px;top:73px;overflow:visible" width="18" height="18" viewBox="0 0 18 18">
<path d="M6 5.5H4A3.2 3.2 0 0 0 4 12H6M11 5.5H13A3.2 3.2 0 0 1 13 12H11" fill="none" stroke="#6A6A6A" stroke-width="2"/>
<path d="M8.5 0.5v3M5 1.2l1.6 2.4M12 1.2l-1.6 2.4M8.5 17v-3M5 16.3l1.6-2.4M12 16.3l-1.6-2.4" stroke="#F09A36" stroke-width="1"/>
</svg>
<svg style="position:absolute;left:500px;top:33px;overflow:visible" width="18" height="19" viewBox="0 0 18 19">
<rect x="1" y="2.5" width="15.5" height="8" rx="1" fill="#3E7CC2"/>
<rect x="1.2" y="5.6" width="15" height="1.8" fill="#111"/>
<path d="M4 14.5H10M8 12.2L10.4 14.5L8 16.8" fill="none" stroke="#F08A24" stroke-width="1.6"/>
<path d="M12.4 11.5V17.5" stroke="#F08A24" stroke-width="1.3"/>
<path d="M12.4 1V2.5" stroke="#F08A24" stroke-width="1"/>
</svg>
<div class="t" style="left:519.66px;top:36.50px;font-size:13px;line-height:13px;font-weight:400;color:#444444;-webkit-text-stroke:0.25px #444444;transform:scaleX(0.9393);">Mark on Track</div>
<svg style="position:absolute;left:607px;top:42px;overflow:visible" width="5" height="3" viewBox="0 0 5 3"><path d="M0 0H4.6L2.3 2.8Z" fill="#555"/></svg>
<svg style="position:absolute;left:500px;top:57px;overflow:visible" width="19" height="18" viewBox="0 0 19 18">
<rect x="1.5" y="1.5" width="7.6" height="5.6" rx="2.8" fill="none" stroke="#5F5F5F" stroke-width="1.7"/>
<rect x="6.4" y="1.5" width="7.6" height="5.6" rx="2.8" fill="none" stroke="#5F5F5F" stroke-width="1.7"/>
<path d="M6.8 10.4L10 14.4L16.6 6.4" fill="none" stroke="#E0503A" stroke-width="2.2"/>
</svg>
<div class="t" style="left:519.72px;top:60.20px;font-size:13px;line-height:13px;font-weight:400;color:#444444;-webkit-text-stroke:0.25px #444444;transform:scaleX(0.8776);">Respect Links</div>
<svg style="position:absolute;left:500px;top:84px;overflow:visible" width="18" height="11" viewBox="0 0 18 11">
<rect x="3.4" y="1.8" width="10.6" height="6.4" rx="1" fill="#F2F2F2" stroke="#BDBDBD" stroke-width="1.1"/>
<path d="M0.5 5H3.4M14 5H17M3.4 4h10.6M3.4 6h10.6" stroke="#BDBDBD" stroke-width="0.9"/>
</svg>
<div class="t" style="left:519.66px;top:83.60px;font-size:13px;line-height:13px;font-weight:400;color:#ABABAB;-webkit-text-stroke:0.25px #ABABAB;transform:scaleX(0.9352);">Inactivate</div>
<svg style="position:absolute;left:637px;top:36px;overflow:visible" width="30" height="30" viewBox="0 0 30 30">
<g transform="translate(15,15) rotate(45) scale(1.22)" fill="#BDBDBD">
<rect x="-4.2" y="-12.5" width="8.4" height="4"/>
<path d="M-2.6 -8.5H2.6L3.8 0H-3.8Z"/>
<rect x="-6.8" y="0" width="13.6" height="3.2"/>
<rect x="-0.9" y="3" width="1.8" height="10"/>
</g>
</svg>
<div class="t" style="left:628.06px;top:71.60px;font-size:13px;line-height:13px;font-weight:400;color:#ABABAB;-webkit-text-stroke:0.25px #ABABAB;transform:scaleX(0.9412);">Manually</div>
<div class="t" style="left:628.57px;top:87.80px;font-size:13px;line-height:13px;font-weight:400;color:#ABABAB;-webkit-text-stroke:0.25px #ABABAB;transform:scaleX(0.9434);">Schedule</div>
<svg style="position:absolute;left:692px;top:40px;overflow:visible" width="30" height="25" viewBox="0 0 30 25">
<rect x="1" y="1.5" width="23.5" height="10.5" fill="#A9A9A9"/>
<path d="M13 17H26M20.6 10.6L27 17L20.6 23.4" fill="none" stroke="#A9A9A9" stroke-width="2.8"/>
<path d="M17.6 12L21 15.4" stroke="#fff" stroke-width="1.4"/>
</svg>
<div class="t" style="left:693.60px;top:71.60px;font-size:13px;line-height:13px;font-weight:400;color:#ABABAB;-webkit-text-stroke:0.25px #ABABAB;transform:scaleX(0.9873);">Auto</div>
<div class="t" style="left:681.58px;top:87.80px;font-size:13px;line-height:13px;font-weight:400;color:#ABABAB;-webkit-text-stroke:0.25px #ABABAB;transform:scaleX(0.9245);">Schedule</div>
<svg style="position:absolute;left:749px;top:40px;overflow:visible" width="34" height="29" viewBox="0 0 34 29">
<rect x="1" y="2" width="24" height="12" rx="1.5" fill="#3E7CC2"/>
<path d="M22 8.2L31.6 17.8L22 27.4L12.4 17.8Z" fill="#EDB95D" stroke="#fff" stroke-width="1.4"/>
<text x="22" y="22.8" font-family="Liberation Sans" font-weight="700" font-size="13.5" fill="#333" text-anchor="middle">?</text>
</svg>
<div class="t" style="left:744.07px;top:71.60px;font-size:13px;line-height:13px;font-weight:400;color:#444444;-webkit-text-stroke:0.25px #444444;transform:scaleX(0.9268);">Inspect</div>
<svg style="position:absolute;left:761.8px;top:93px;overflow:visible" width="5" height="3" viewBox="0 0 5 3"><path d="M0 0H4.6L2.3 2.8Z" fill="#555"/></svg>
<svg style="position:absolute;left:793px;top:37px;overflow:visible" width="32" height="30" viewBox="0 0 32 30">
<rect x="1.2" y="1.6" width="25.6" height="24.4" fill="#BFBFBF"/>
<rect x="1.2" y="1.6" width="25.6" height="2.4" fill="#9A9A9A"/>
<g fill="#FFFFFF"><rect x="2.6" y="5.4" width="3.6" height="3.6"/><rect x="7.6" y="5.4" width="3.6" height="3.6"/><rect x="12.6" y="5.4" width="3.6" height="3.6"/><rect x="17.6" y="5.4" width="3.6" height="3.6"/><rect x="22.6" y="5.4" width="3.6" height="3.6"/><rect x="2.6" y="10.4" width="3.6" height="3.6"/><rect x="7.6" y="10.4" width="3.6" height="3.6"/><rect x="12.6" y="10.4" width="3.6" height="3.6"/><rect x="17.6" y="10.4" width="3.6" height="3.6"/><rect x="22.6" y="10.4" width="3.6" height="3.6"/><rect x="2.6" y="15.4" width="3.6" height="3.6"/><rect x="7.6" y="15.4" width="3.6" height="3.6"/><rect x="12.6" y="15.4" width="3.6" height="3.6"/><rect x="17.6" y="15.4" width="3.6" height="3.6"/><rect x="22.6" y="15.4" width="3.6" height="3.6"/><rect x="2.6" y="20.4" width="3.6" height="3.6"/><rect x="7.6" y="20.4" width="3.6" height="3.6"/><rect x="12.6" y="20.4" width="3.6" height="3.6"/><rect x="17.6" y="20.4" width="3.6" height="3.6"/><rect x="22.6" y="20.4" width="3.6" height="3.6"/></g>
<rect x="7.6" y="10.4" width="3.6" height="3.6" fill="#9C9C9C"/>
<path d="M14 22.5H28.5M23.6 17.6L28.6 22.5L23.6 27.4" fill="none" stroke="#fff" stroke-width="4.5"/>
<path d="M14 22.5H28.5M23.6 17.6L28.6 22.5L23.6 27.4" fill="none" stroke="#BDBDBD" stroke-width="2.4"/>
</svg>
<div class="t" style="left:792.23px;top:71.60px;font-size:13px;line-height:13px;font-weight:400;color:#ABABAB;-webkit-text-stroke:0.25px #ABABAB;transform:scaleX(0.9659);">Move</div>
<svg style="position:absolute;left:804.2px;top:93px;overflow:visible" width="5" height="3" viewBox="0 0 5 3"><path d="M0 0H4.6L2.3 2.8Z" fill="#BDBDBD"/></svg>
<svg style="position:absolute;left:836px;top:37px;overflow:visible" width="32" height="32" viewBox="0 0 32 32">
<rect x="0.8" y="1.2" width="26" height="24.8" fill="#8C8C8C"/>
<rect x="0.8" y="1.2" width="26" height="3" fill="#666"/>
<g fill="#FFFFFF"><rect x="2.0" y="5.4" width="4.2" height="4.0"/><rect x="7.1" y="5.4" width="4.2" height="4.0"/><rect x="12.2" y="5.4" width="4.2" height="4.0"/><rect x="17.299999999999997" y="5.4" width="4.2" height="4.0"/><rect x="22.4" y="5.4" width="4.2" height="4.0"/><rect x="2.0" y="10.4" width="4.2" height="4.0"/><rect x="7.1" y="10.4" width="4.2" height="4.0"/><rect x="12.2" y="10.4" width="4.2" height="4.0"/><rect x="17.299999999999997" y="10.4" width="4.2" height="4.0"/><rect x="22.4" y="10.4" width="4.2" height="4.0"/><rect x="2.0" y="15.4" width="4.2" height="4.0"/><rect x="7.1" y="15.4" width="4.2" height="4.0"/><rect x="12.2" y="15.4" width="4.2" height="4.0"/><rect x="17.299999999999997" y="15.4" width="4.2" height="4.0"/><rect x="22.4" y="15.4" width="4.2" height="4.0"/><rect x="2.0" y="20.4" width="4.2" height="4.0"/><rect x="7.1" y="20.4" width="4.2" height="4.0"/><rect x="12.2" y="20.4" width="4.2" height="4.0"/><rect x="17.299999999999997" y="20.4" width="4.2" height="4.0"/><rect x="22.4" y="20.4" width="4.2" height="4.0"/></g>
<path d="M16.4 14.4A5.4 5.4 0 1 1 24.8 18.8C22.8 20.2 22.2 21.2 22.2 23.6" fill="none" stroke="#fff" stroke-width="6"/>
<path d="M16.4 14.4A5.4 5.4 0 1 1 24.8 18.8C22.8 20.2 22.2 21.2 22.2 23.6" fill="none" stroke="#3E7CC2" stroke-width="3.4"/>
<circle cx="22.2" cy="28.2" r="2.3" fill="#3E7CC2"/>
</svg>
<div class="t" style="left:833.11px;top:71.60px;font-size:13px;line-height:13px;font-weight:400;color:#444444;-webkit-text-stroke:0.25px #444444;transform:scaleX(0.9935);">Mode</div>
<svg style="position:absolute;left:846.8px;top:93px;overflow:visible" width="5" height="3" viewBox="0 0 5 3"><path d="M0 0H4.6L2.3 2.8Z" fill="#555"/></svg>
<svg style="position:absolute;left:884px;top:35px;overflow:visible" width="31" height="22" viewBox="0 0 31 22">
<rect x="5" y="9" width="24" height="11.5" rx="1" fill="#3E7CC2"/>
<path d="M7 1.2V13.4M1 7.3H13.2" stroke="#fff" stroke-width="5.6"/>
<path d="M7 1.2V13.4M1 7.3H13.2" stroke="#4E9E80" stroke-width="3.6"/>
</svg>
<div class="t" style="left:889.71px;top:71.60px;font-size:13px;line-height:13px;font-weight:400;color:#444444;-webkit-text-stroke:0.25px #444444;transform:scaleX(0.8734);">Task</div>
<svg style="position:absolute;left:897.8px;top:93px;overflow:visible" width="5" height="3" viewBox="0 0 5 3"><path d="M0 0H4.6L2.3 2.8Z" fill="#555"/></svg>
<svg style="position:absolute;left:923px;top:33px;overflow:visible" width="20" height="14" viewBox="0 0 20 14">
<path d="M4.2 1V8M0.8 4.5H7.6" stroke="#fff" stroke-width="3.4"/><path d="M4.2 1.4V7.6M1.1 4.5H7.3" stroke="#4E9E80" stroke-width="2.1"/>
<path d="M4 8v4.5M4 9H16.5V12.5" fill="none" stroke="#4D4D4D" stroke-width="1.4"/>
</svg>
<div class="t" style="left:944.38px;top:36.50px;font-size:13px;line-height:13px;font-weight:400;color:#444444;-webkit-text-stroke:0.25px #444444;transform:scaleX(0.9273);">Summary</div>
<svg style="position:absolute;left:923px;top:56px;overflow:visible" width="20" height="18" viewBox="0 0 20 18">
<path d="M4.2 0.8V7.4M0.9 4.1H7.5" stroke="#4E9E80" stroke-width="2.1"/>
<path d="M10.6 4.2L17.2 10.8L10.6 17.4L4 10.8Z" fill="#6E6E6E" stroke="#fff" stroke-width="0.8"/>
</svg>
<div class="t" style="left:944.04px;top:60.20px;font-size:13px;line-height:13px;font-weight:400;color:#444444;-webkit-text-stroke:0.25px #444444;transform:scaleX(0.9630);">Milestone</div>
<svg style="position:absolute;left:923px;top:81px;overflow:visible" width="20" height="18" viewBox="0 0 20 18">
<path d="M4 1.2V5.4M1.9 3.3H6.1" stroke="#C9C9C9" stroke-width="1.4"/>
<path d="M4.4 8H14.6V16.4H4.4Z" fill="#C4C4C4"/><path d="M9.4 8L12 4.8H17.2V13.4L14.6 16.4V8Z" fill="#D6D6D6"/>
<path d="M8 5l2-2M11 4l2-2" stroke="#CFCFCF" stroke-width="0.9"/>
</svg>
<div class="t" style="left:944.30px;top:83.60px;font-size:13px;line-height:13px;font-weight:400;color:#ABABAB;-webkit-text-stroke:0.25px #ABABAB;transform:scaleX(0.9047);">Deliverable</div>
<svg style="position:absolute;left:1006px;top:90px;overflow:visible" width="5" height="3" viewBox="0 0 5 3"><path d="M0 0H4.4L2.2 2.8Z" fill="#C4C4C4"/></svg>
<svg style="position:absolute;left:1045px;top:36px;overflow:visible" width="35" height="30" viewBox="0 0 35 30">
<rect x="2.8" y="1.6" width="27.6" height="25.6" fill="#fff" stroke="#7A7A7A" stroke-width="1.2"/>
<rect x="3.2" y="2" width="26.8" height="3.4" fill="#3E7CC2"/>
<rect x="6.4" y="13.4" width="7" height="2.8" fill="#3E7CC2"/>
<path d="M14.8 7.6V25.2" stroke="#777" stroke-width="1"/>
<path d="M17.6 9.4H27M17.6 12.4H27M17.6 15.4H27M17.6 18.4H27M17.6 21.4H27" stroke="#B5B5B5" stroke-width="1"/>
</svg>
<div class="t" style="left:1028.17px;top:71.60px;font-size:13px;line-height:13px;font-weight:400;color:#444444;-webkit-text-stroke:0.25px #444444;transform:scaleX(1.0300);">Information</div>
<div style="position:absolute;left:0.00px;top:0.00px;width:1080.00px;height:1.00px;background:#8a8a8a;"></div>
<div style="position:absolute;left:0.00px;top:0.00px;width:1.20px;height:590.00px;background:#222;"></div>
<div style="position:absolute;left:0.00px;top:588.00px;width:1080.00px;height:2.00px;background:#1a1a1a;"></div></body></html>
